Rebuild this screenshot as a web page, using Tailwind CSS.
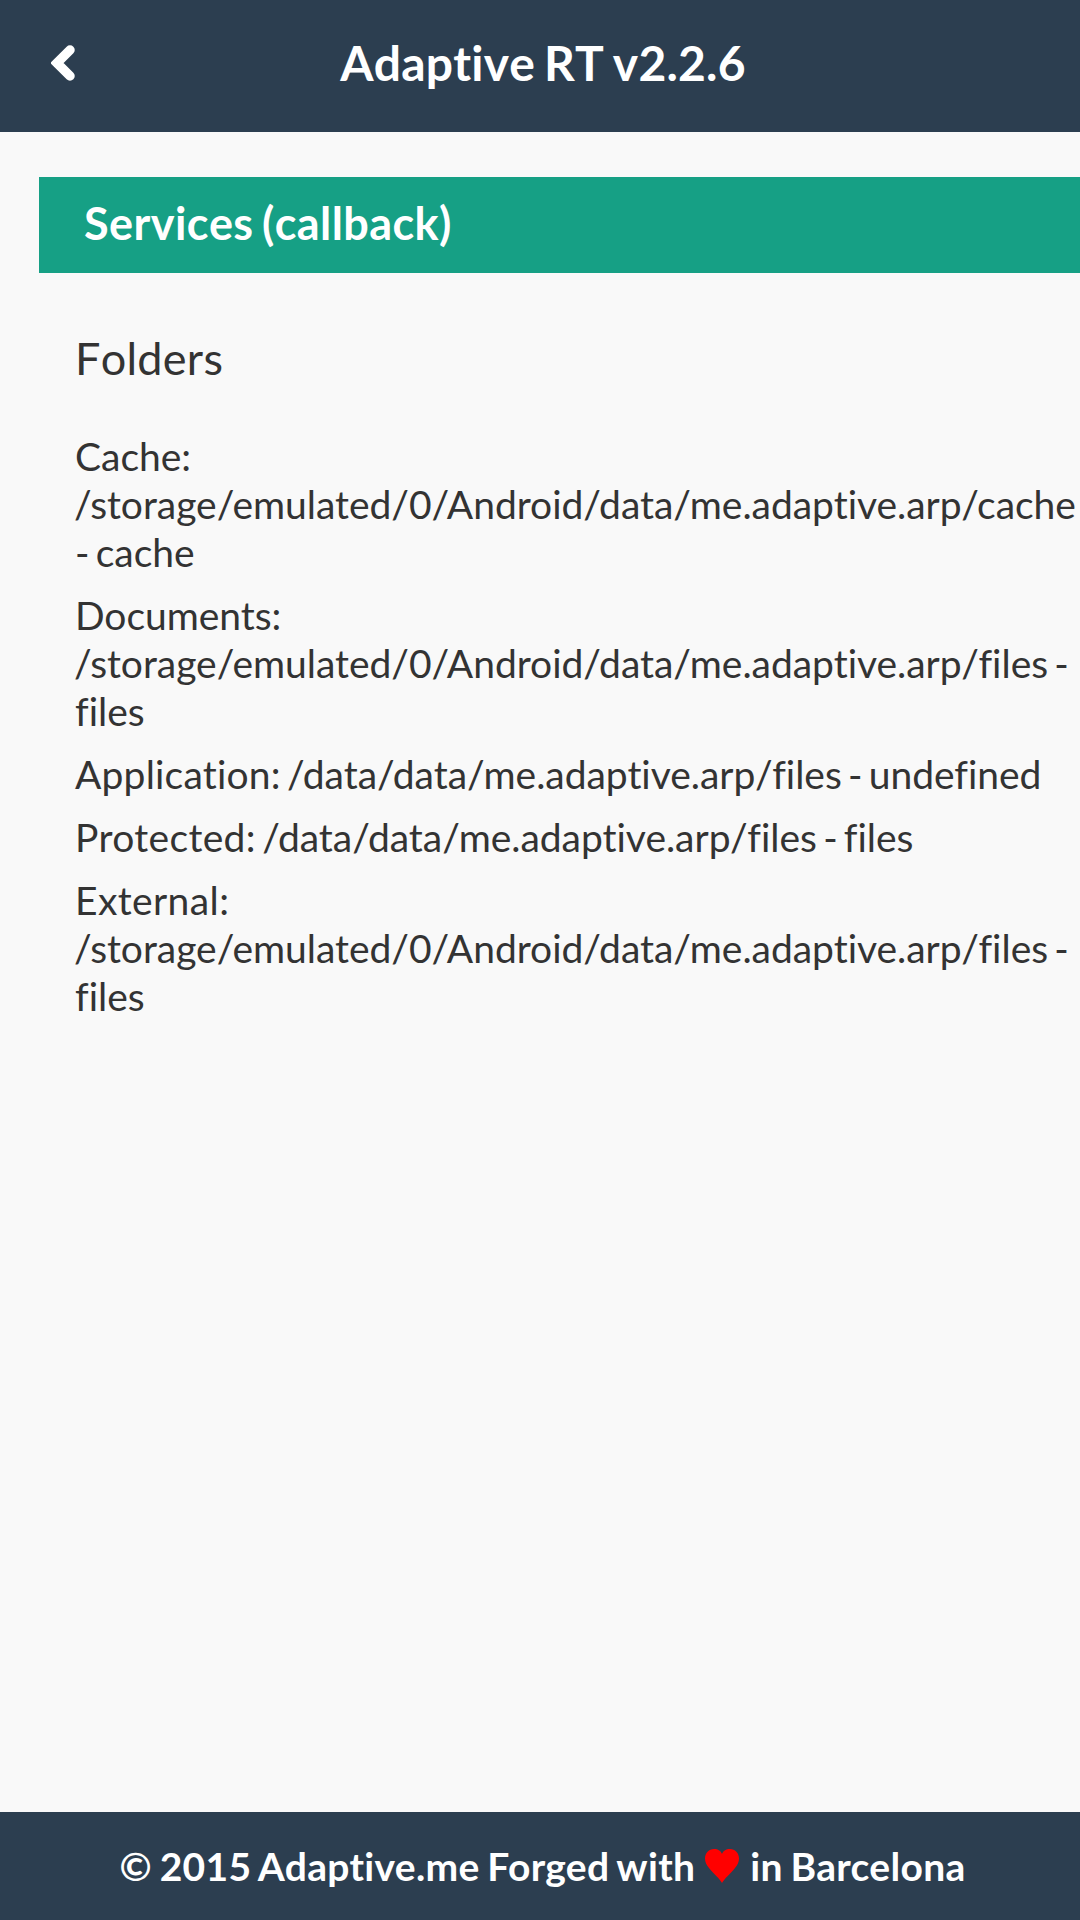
<!DOCTYPE html>
<html lang="en">
<head>
<meta charset="utf-8">
<title>Adaptive RT</title>
<script src="https://cdn.jsdelivr.net/npm/@tailwindcss/browser@4"></script>
</head>
<body class="bg-[#f9f9f9]">
<div class="flex h-[1920px] w-[1080px] flex-col overflow-hidden bg-[#f9f9f9] font-['Lato',sans-serif] text-[#333333] [font-variant-ligatures:none]">
  <header class="grid h-[132px] shrink-0 grid-cols-[120px_1fr_120px] items-center bg-[#2c3e50] pb-[6px] text-white">
    <svg class="ml-[51px] h-[36px] w-[24px]" viewBox="0 0 24 36"><path d="M19 5 L6 18 L19 31" fill="none" stroke="#fff" stroke-width="9.500" stroke-linecap="round"/></svg>
    <h1 class="pl-[6px] text-center text-[48px] leading-[60px] font-bold tracking-[0.2px] whitespace-nowrap [font-kerning:none] [word-spacing:-3px]">Adaptive RT v2.2.6</h1>
  </header>
  <main class="flex-1 pt-[45px] pl-[39px]">
    <h2 class="h-[96px] bg-[#16a085] pl-[45px] text-[45px] leading-[93px] font-bold tracking-[0.42px] text-white [font-kerning:none] [word-spacing:-3px]">Services (callback)</h2>
    <section class="pt-[55px] pl-[36px]">
      <h3 class="mb-[44px] text-[45px] leading-[60px] tracking-[0.25px] [font-kerning:none]">Folders</h3>
      <div class="flex flex-col gap-[15px] text-[39px] leading-[48px] tracking-[-0.03px] whitespace-nowrap [word-spacing:-3.7px]">
        <p>Cache:<br><span class="-ml-px">/storage/emulated/0/Android/data/me.adaptive.arp/cache</span><br>- cache</p>
        <p>Documents:<br><span class="-ml-px">/storage/emulated/0/Android/data/me.adaptive.arp/files -</span><br>files</p>
        <p><span class="tracking-[0.2px]">Application:</span> /data/data/me.adaptive.arp/files - undefined</p>
        <p><span class="tracking-[0.35px]">Protected:</span> /data/data/me.adaptive.arp/files - files</p>
        <p><span class="tracking-[0.4px]">External:</span><br><span class="-ml-px">/storage/emulated/0/Android/data/me.adaptive.arp/files -</span><br>files</p>
      </div>
    </section>
  </main>
  <footer class="flex h-[108px] shrink-0 items-center justify-center bg-[#2c3e50] pl-[5px] text-[39px] font-bold tracking-[0.3px] whitespace-nowrap text-white [word-spacing:-2px]">
    <span>© 2015 Adaptive.me Forged with</span>
    <svg class="mr-[11px] ml-[10px] h-[34px] w-[34px]" viewBox="0 0 34 34"><path d="M17 34 C15 30 8 24 4 19 C1.500 16 0 13 0 9.500 C0 4 4 0 9 0 C13 0 16 2 17 5 C18 2 21 0 25 0 C30 0 34 4 34 9.500 C34 13 32.500 16 30 19 C26 24 19 30 17 34 Z" fill="#f00"/></svg>
    <span>in Barcelona</span>
  </footer>
</div>
</body>
</html>
